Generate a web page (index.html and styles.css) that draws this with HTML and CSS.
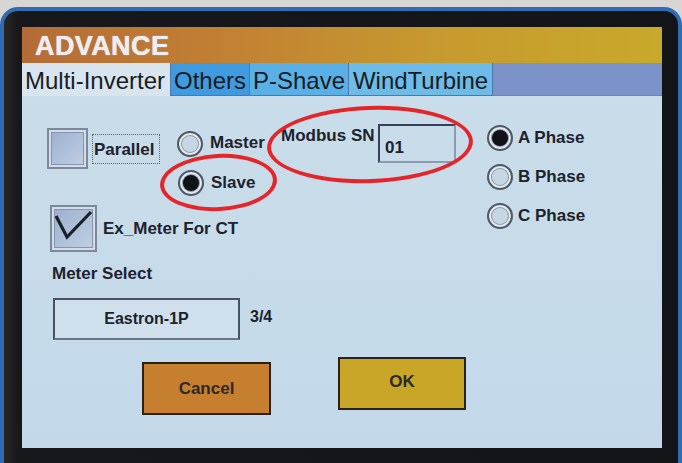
FILE: index.html
```html
<!DOCTYPE html>
<html>
<head>
<meta charset="utf-8">
<link rel="stylesheet" href="styles.css">
</head>
<body>
<div class="device">
  <div class="screen">
    <div class="header">ADVANCE</div>
    <div class="tabs">
      <div class="tab tab-active">Multi-Inverter</div>
      <div class="tab tab-others">Others</div>
      <div class="tab tab-pshave">P-Shave</div>
      <div class="tab tab-wind">WindTurbine</div>
      <div class="tab-rest"></div>
    </div>
    <div class="content">
      <div class="top">
        <div class="left">
          <div class="row1">
            <div class="checkbox cb-parallel"></div>
            <div class="label focus">Parallel</div>
            <div class="radio radio-master"></div>
            <div class="label radio-text master-text">Master</div>
          </div>
          <div class="row2">
            <div class="radio checked"></div>
            <div class="label radio-text">Slave</div>
          </div>
          <div class="row3">
            <div class="checkbox cb-ex">
              <svg class="check" width="43" height="43" viewBox="0 0 43 43"><path d="M4 9 L15 30 L39 5" fill="none" stroke="#1b1f2a" stroke-width="3.2" stroke-linejoin="miter"/></svg>
            </div>
            <div class="label ex-text">Ex_Meter For CT</div>
          </div>
        </div>
        <div class="modbus">
          <div class="label modbus-label">Modbus SN</div>
          <div class="input">01</div>
        </div>
        <div class="phases">
          <div class="phase"><div class="radio checked"></div><div class="label phase-text">A Phase</div></div>
          <div class="phase"><div class="radio"></div><div class="label phase-text">B Phase</div></div>
          <div class="phase"><div class="radio"></div><div class="label phase-text">C Phase</div></div>
        </div>
      </div>
      <div class="label meter-label">Meter Select</div>
      <div class="meter-row">
        <div class="select">Eastron-1P</div>
        <div class="count">3/4</div>
      </div>
      <div class="buttons">
        <div class="btn btn-cancel">Cancel</div>
        <div class="btn btn-ok">OK</div>
      </div>
      <div class="mark mark-slave"></div>
      <div class="mark mark-modbus"></div>
    </div>
  </div>
</div>
</body>
</html>
```

FILE: styles.css
```css
html, body {
  margin: 0;
  padding: 0;
}
body {
  width: 682px;
  height: 463px;
  overflow: hidden;
  background: linear-gradient(#d7d6d4, #c9c8c6);
  font-family: "Liberation Sans", Arial, sans-serif;
}
.device {
  box-sizing: border-box;
  margin-top: 7px;
  height: 460px;
  background: linear-gradient(90deg, #2a2522 0px, #17181c 14px, #131418 100%);
  border: 4px solid #2f6cb4;
  border-bottom: none;
  border-radius: 18px 18px 0 0;
  padding: 16px 16px 0 18px;
}
.screen {
  width: 640px;
  height: 421px;
  background: linear-gradient(180deg, #cbdde9 0%, #c3d9ea 100%);
  display: flex;
  flex-direction: column;
}
.header {
  height: 36px;
  line-height: 38px;
  padding-left: 13px;
  background: linear-gradient(90deg, #b46c36 0%, #c17f33 30%, #c79a2e 65%, #c8a92b 100%);
  color: #eceef3;
  font-weight: bold;
  font-size: 27px;
  letter-spacing: 0.4px;
  text-shadow: 0 0 1px #fff;
}
.tabs {
  height: 33px;
  display: flex;
  background: #7b93c9;
}
.tab {
  box-sizing: border-box;
  height: 33px;
  line-height: 35px;
  font-size: 24px;
  color: #1a1c22;
  text-align: center;
  border-right: 1px solid #4d78a8;
  border-bottom: 1px solid #4d78a8;
}
.tab-active {
  width: 149px;
  background: #d8e5ee;
  border-bottom: none;
  text-align: left;
  padding-left: 3px;
}
.tab-others {
  width: 79px;
  background: #409ae0;
}
.tab-pshave {
  width: 99px;
  background: #58b0e7;
}
.tab-wind {
  width: 144px;
  background: #6cbbe9;
}
.tab-rest {
  flex: 1;
  border-bottom: 1px solid #6d86b8;
}
.content {
  flex: 1;
  position: relative;
  padding: 28px 0 0 25px;
  display: flex;
  flex-direction: column;
  color: #1d222c;
}
.label {
  font-weight: bold;
  font-size: 17px;
  line-height: 20px;
  white-space: nowrap;
}
.top {
  display: flex;
  align-items: flex-start;
}
.left {
  width: 234px;
  display: flex;
  flex-direction: column;
}
.row1 {
  display: flex;
  align-items: center;
  margin-top: 4px;
}
.checkbox {
  box-sizing: border-box;
  border: 2px solid #7d889a;
  box-shadow: inset 0 0 0 2px #d3dce8, inset 0 0 0 3px #8795ab;
  background: linear-gradient(135deg, #9aaecd 0%, #b2c3dc 60%, #c2d0e2 100%);
}
.cb-parallel {
  width: 41px;
  height: 41px;
}
.focus {
  box-sizing: border-box;
  margin-left: 4px;
  width: 68px;
  height: 30px;
  line-height: 30px;
  border: 1px dotted #5b6474;
  padding-left: 1px;
}
.radio {
  box-sizing: border-box;
  width: 26px;
  height: 26px;
  border-radius: 50%;
  border: 2px solid #4f5866;
  box-shadow: inset 0 0 0 2px #e3e9f0, inset 0 0 0 3px #8a96a6;
  background: #c7d6e5;
  flex: none;
}
.radio.checked {
  background: radial-gradient(circle, #101218 0, #101218 8px, #8a96a6 8.5px, #e3e9f0 9.5px);
}
.radio-master {
  margin-left: 17px;
  align-self: flex-start;
  margin-top: 3px;
}
.radio-text {
  margin-left: 7px;
}
.master-text {
  align-self: flex-start;
  margin-top: 5px;
}
.row2 {
  display: flex;
  align-items: center;
  margin-top: 1px;
  padding-left: 131px;
}
.row3 {
  display: flex;
  align-items: center;
  margin-top: 9px;
  margin-left: 3px;
}
.cb-ex {
  width: 47px;
  height: 47px;
  position: relative;
}
.check {
  display: block;
  margin: 0;
}
.ex-text {
  margin-left: 6px;
}
.modbus {
  display: flex;
  align-items: flex-start;
}
.modbus-label {
  margin-top: 2px;
  width: 97px;
}
.input {
  box-sizing: border-box;
  width: 78px;
  height: 39px;
  border: 2px solid #8d9ab0;
  border-top-color: #36405a;
  border-left-color: #36405a;
  padding: 12px 0 0 5px;
  font-size: 17px;
  font-weight: bold;
  line-height: 20px;
  color: #1d222c;
}
.phases {
  margin-left: 31px;
  margin-top: 1px;
  display: flex;
  flex-direction: column;
  gap: 13px;
}
.phase {
  display: flex;
  align-items: center;
}
.phase-text {
  margin-left: 5px;
}
.meter-label {
  margin-top: 12px;
  margin-left: 5px;
}
.meter-row {
  display: flex;
  align-items: center;
  margin-top: 14px;
  margin-left: 6px;
}
.select {
  box-sizing: border-box;
  width: 187px;
  height: 42px;
  border: 2px solid #4a5164;
  border-bottom-color: #6b7588;
  background: #cfe0ec;
  text-align: center;
  font-weight: bold;
  font-size: 16px;
  line-height: 38px;
  color: #1d222c;
}
.count {
  margin-left: 10px;
  font-weight: bold;
  font-size: 16px;
  margin-top: -4px;
}
.buttons {
  display: flex;
  align-items: flex-start;
  margin-top: 22px;
  margin-left: 95px;
  gap: 67px;
}
.btn {
  box-sizing: border-box;
  width: 129px;
  height: 53px;
  border: 2px solid #2a2218;
  text-align: center;
  line-height: 49px;
  font-weight: bold;
  font-size: 17px;
  color: #2c2a28;
}
.btn-cancel {
  background: #c67f2f;
}
.btn-ok {
  width: 128px;
  margin-top: -5px;
  background: #c9a628;
  line-height: 45px;
}
.mark {
  position: absolute;
  box-sizing: border-box;
  border: 4px solid #e4262b;
  border-radius: 50%;
}
.mark-slave {
  left: 138px;
  top: 58px;
  width: 117px;
  height: 57px;
  transform: rotate(-3deg);
}
.mark-modbus {
  left: 245px;
  top: 10px;
  width: 206px;
  height: 77px;
  transform: rotate(-2deg);
}
```
